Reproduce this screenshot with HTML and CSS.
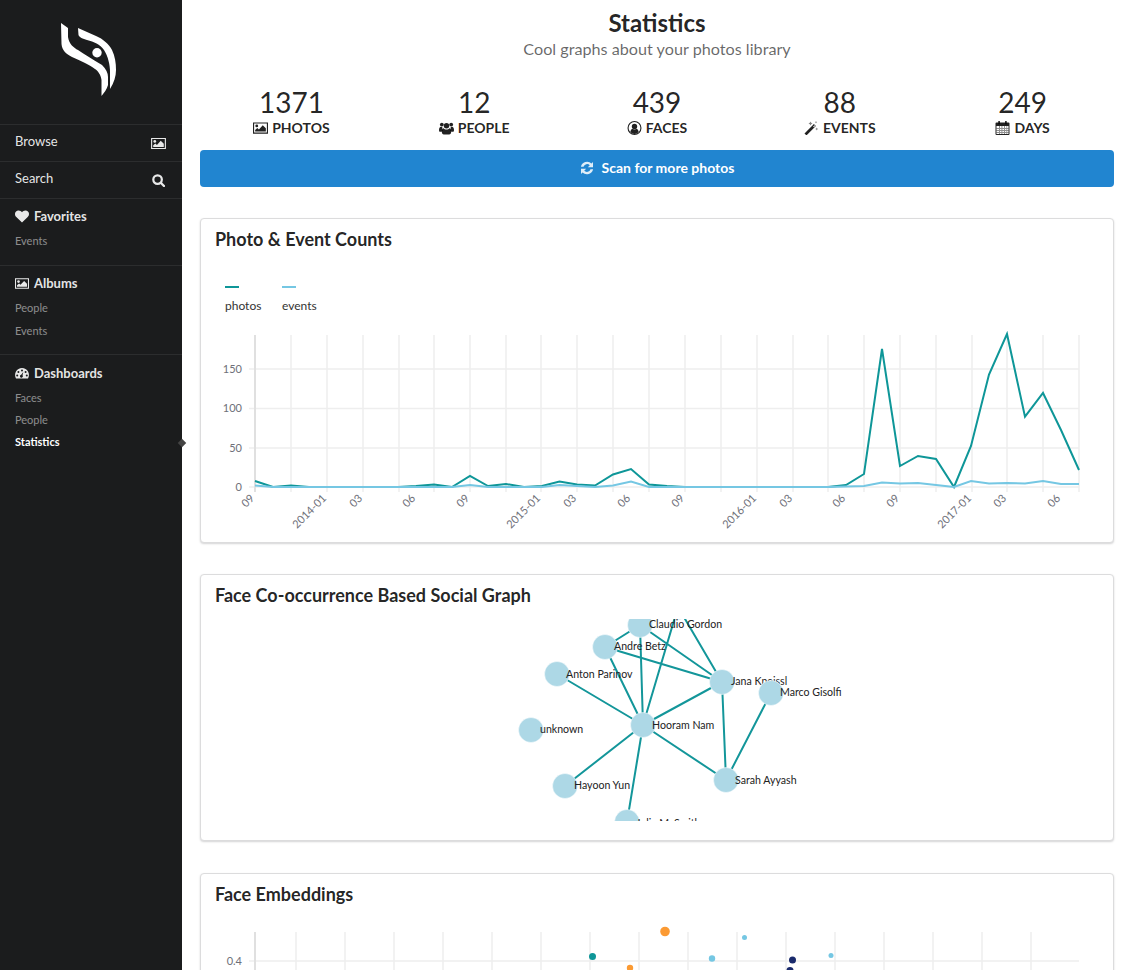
FILE: index.html
```html
<!DOCTYPE html>
<html lang="en">
<head>
    <meta charset="UTF-8">
    <meta name="viewport" content="width=device-width, initial-scale=1.0">
    <title>Statistics</title>
    <link rel="stylesheet" href="styles.css">
</head>
<body>

<svg class="icon-defs" width="0" height="0">
    <defs>
        <symbol id="i-image" viewBox="0 0 16 14">
            <path fill-rule="evenodd" d="M0 1h16v12H0zM1.200 2.200v9.600h13.600V2.200z"/>
            <circle cx="4" cy="4.800" r="1.500"/>
            <path d="M2.300 10.700V9l2.300-2 1.700 1.500L10.400 4l3.300 3.300v3.400z"/>
        </symbol>
        <symbol id="i-search" viewBox="0 0 14 14">
            <path fill-rule="evenodd" d="M6 .2a5.800 5.800 0 1 1 0 11.600A5.800 5.800 0 0 1 6 .2zm0 2.400a3.400 3.400 0 1 0 0 6.800 3.400 3.400 0 0 0 0-6.800z"/>
            <path d="M8.800 10.600l1.800-1.800 3.200 3.200a1.270 1.270 0 0 1-1.800 1.800z"/>
        </symbol>
        <symbol id="i-heart" viewBox="0 0 14 13">
            <path d="M7 12.600L1.300 7A3.700 3.700 0 0 1 0 4 3.500 3.500 0 0 1 3.700.4C5 .4 6.200 1.200 7 2.200 7.800 1.200 9 .4 10.300.4A3.500 3.500 0 0 1 14 4c0 1.200-.5 2.200-1.300 3z"/>
        </symbol>
        <symbol id="i-dash" viewBox="0 0 14 12">
            <path fill-rule="evenodd" d="M7 .5a7 7 0 0 1 6 10.500H1A7 7 0 0 1 7 .5zM7 2a1 1 0 1 0 0 2 1 1 0 0 0 0-2zM3.400 3.600a1 1 0 1 0 0 2 1 1 0 0 0 0-2zM10.600 3.600a1 1 0 1 0 0 2 1 1 0 0 0 0-2zM2.200 7a1 1 0 1 0 0 2 1 1 0 0 0 0-2zM11.800 7a1 1 0 1 0 0 2 1 1 0 0 0 0-2zM8.300 4.500L6.200 7.300a1.400 1.400 0 1 0 1.300.5z"/>
        </symbol>
        <symbol id="i-users" viewBox="0 0 16 14">
            <circle cx="8" cy="4.500" r="2.900"/>
            <circle cx="3" cy="3.300" r="2"/>
            <circle cx="13" cy="3.300" r="2"/>
            <path d="M0 9c0-2 .8-3.400 2.200-3.400.5 0 1 .2 1.400.5-.3 1-.1 2.300.6 3.200-.6.400-1.100 1-1.300 1.700H1C.3 11 0 10.200 0 9zM16 9c0-2-.8-3.400-2.200-3.400-.5 0-1 .2-1.400.5.300 1 .1 2.300-.6 3.200.6.400 1.100 1 1.300 1.700H15c.7 0 1-.8 1-2z"/>
            <path d="M4.800 7.200c.7.800 1.900 1.300 3.200 1.300s2.500-.5 3.200-1.300c1.300.2 1.800 1.800 1.800 3.800 0 1.700-.8 3-2.200 3H5.200C3.800 14 3 12.700 3 11c0-2 .5-3.600 1.800-3.800z"/>
        </symbol>
        <symbol id="i-face" viewBox="0 0 14 14">
            <path fill-rule="evenodd" d="M7 0a7 7 0 1 1 0 14A7 7 0 0 1 7 0zm0 1.100a5.900 5.900 0 1 0 0 11.800A5.900 5.900 0 0 0 7 1.100z"/>
            <circle cx="7" cy="5.500" r="2.700"/>
            <path d="M2.800 11c.3-1.800 1.200-3 2.300-3.200.5.400 1.200.7 1.900.7s1.400-.3 1.900-.7c1.100.2 2 1.400 2.300 3.200A5.900 5.900 0 0 1 7 12.900 5.900 5.900 0 0 1 2.800 11z"/>
        </symbol>
        <symbol id="i-magic" viewBox="0 0 14 14">
            <path d="M0 12.400L9.400 3l2 2L2 14.400z"/>
            <path d="M8.600 5.600l1.400-1.400 .7.700-1.400 1.400z" fill="#fff"/>
            <path d="M6 .5l.7 1.300L8 2.500l-1.300.7L6 4.500l-.7-1.300L4 2.500l1.300-.7zM12.200 6.500l.5 1 1 .5-1 .5-.5 1-.5-1-1-.5 1-.5zM11.500 0l.4.8.8.4-.8.4-.4.8-.4-.8-.8-.4.8-.4z" opacity=".55"/>
        </symbol>
        <symbol id="i-calendar" viewBox="0 0 14 14">
            <path fill-rule="evenodd" d="M1 1.500h12a1 1 0 0 1 1 1V13a1 1 0 0 1-1 1H1a1 1 0 0 1-1-1V2.500a1 1 0 0 1 1-1zM1 5v8h12V5z"/>
            <path d="M2.800 0h1.600v3.200H2.800zM9.600 0h1.600v3.200H9.600z"/>
            <path d="M3.500 5v8h.5V5zM6.200 5v8h.5V5zM8.900 5v8h.5V5zM11.200 5v8h.4V5zM1 7.100h12v.5H1zM1 9.300h12v.5H1zM1 11.300h12v.5H1z"/>
        </symbol>
        <symbol id="i-refresh" viewBox="0 0 14 14">
            <path d="M13 1v5.200H7.800l2-2A3.800 3.800 0 0 0 3.500 5.800H.9A6.400 6.400 0 0 1 11.500 2.500zM1 13V7.800h5.200l-2 2a3.800 3.800 0 0 0 6.300-1.600h2.600A6.400 6.400 0 0 1 2.500 11.500z"/>
        </symbol>
    </defs>
</svg>

<div class="layout">
    <aside class="sidebar">
        <div class="logo">
            <svg width="182" height="124" viewBox="0 0 182 124">
                <path class="logo-shape" d="M61 23 L68 28 L68 37 C69 44 74 48 78 50 C84 54 92 59 102 65 C106 69 108 73 108 77 L108 85 C107 89 104 93 101.500 96 L101.500 80 C101 75 98 71 95 69 C90 65 81 61 72 57 C66 54 62 50 61.500 44 Z"/>
                <path class="logo-shape" d="M78 28 C84 31 90 33 96 36 C103 39 109 44 112 50 C115 56 116 63 116 70 C116 76 114 83 110 89 L110 72 C110 65 108 56 104 50 C100 44 94 42 87 40 C83 39 79 37 78.500 35 Z"/>
                <circle class="logo-shape" cx="97" cy="52.700" r="4.700"/>
            </svg>
        </div>

        <a class="side-link">Browse <svg class="side-icon icon-browse"><use href="#i-image"/></svg></a>
        <a class="side-link">Search <svg class="side-icon icon-find"><use href="#i-search"/></svg></a>

        <div class="side-group group-fav">
            <div class="side-title"><svg class="title-icon"><use href="#i-heart"/></svg>Favorites</div>
            <a class="side-sub">Events</a>
        </div>
        <div class="side-group group-albums">
            <div class="side-title"><svg class="title-icon"><use href="#i-image"/></svg>Albums</div>
            <a class="side-sub">People</a>
            <a class="side-sub">Events</a>
        </div>
        <div class="side-group group-dash">
            <div class="side-title"><svg class="title-icon"><use href="#i-dash"/></svg>Dashboards</div>
            <a class="side-sub">Faces</a>
            <a class="side-sub">People</a>
            <a class="side-sub active">Statistics</a>
        </div>
        <span class="side-toggle"></span>
    </aside>

    <main class="content">
        <div class="page-head">
            <h1>Statistics</h1>
            <p>Cool graphs about your photos library</p>
        </div>

        <div class="stats">
            <div class="stat"><div class="stat-value">1371</div><div class="stat-label"><svg class="stat-icon"><use href="#i-image"/></svg>Photos</div></div>
            <div class="stat"><div class="stat-value">12</div><div class="stat-label"><svg class="stat-icon"><use href="#i-users"/></svg>People</div></div>
            <div class="stat"><div class="stat-value">439</div><div class="stat-label"><svg class="stat-icon"><use href="#i-face"/></svg>Faces</div></div>
            <div class="stat"><div class="stat-value">88</div><div class="stat-label"><svg class="stat-icon"><use href="#i-magic"/></svg>Events</div></div>
            <div class="stat"><div class="stat-value">249</div><div class="stat-label"><svg class="stat-icon"><use href="#i-calendar"/></svg>Days</div></div>
        </div>

        <button class="scan-button"><svg class="scan-icon"><use href="#i-refresh"/></svg>Scan for more photos</button>

        <section class="card card-counts">
            <h3>Photo &amp; Event Counts</h3>
            <svg class="plot" width="912" height="288" viewBox="201 253 912 288">
                <g class="legend">
                    <rect x="225" y="286" width="14" height="2" fill="#0e9698"/>
                    <rect x="282" y="286" width="14" height="2" fill="#75c7e3"/>
                    <text x="225" y="310">photos</text>
                    <text x="282" y="310">events</text>
                </g>
                <path class="grid" d="M291 335V492M327 335V492M363 335V492M399 335V492M434 335V492M470 335V492M506 335V492M541 335V492M577 335V492M613 335V492M649 335V492M685 335V492M721 335V492M757 335V492M793 335V492M828 335V492M864 335V492M900 335V492M936 335V492M972 335V492M1007 335V492M1043 335V492M1079 335V492"/>
                <path class="grid" d="M249 369H1079M249 408.500H1079M249 448H1079M249 487H1079"/>
                <path class="axis" d="M255 335V492"/>
                <g class="y-labels">
                    <text x="242" y="373">150</text>
                    <text x="242" y="412">100</text>
                    <text x="242" y="452">50</text>
                    <text x="242" y="491">0</text>
                </g>
                <g class="x-labels">
                    <text transform="translate(255 499) rotate(-45)">09</text>
                    <text transform="translate(327 499) rotate(-45)">2014-01</text>
                    <text transform="translate(363 499) rotate(-45)">03</text>
                    <text transform="translate(416 499) rotate(-45)">06</text>
                    <text transform="translate(470 499) rotate(-45)">09</text>
                    <text transform="translate(541 499) rotate(-45)">2015-01</text>
                    <text transform="translate(577 499) rotate(-45)">03</text>
                    <text transform="translate(631 499) rotate(-45)">06</text>
                    <text transform="translate(685 499) rotate(-45)">09</text>
                    <text transform="translate(757 499) rotate(-45)">2016-01</text>
                    <text transform="translate(793 499) rotate(-45)">03</text>
                    <text transform="translate(846 499) rotate(-45)">06</text>
                    <text transform="translate(900 499) rotate(-45)">09</text>
                    <text transform="translate(972 499) rotate(-45)">2017-01</text>
                    <text transform="translate(1007 499) rotate(-45)">03</text>
                    <text transform="translate(1061 499) rotate(-45)">06</text>
                </g>
                <polyline class="line-photos" points="255,481 273,487 291,485.500 309,487 327,487 345,487 363,487 380,487 398,487 416,486 434,484.500 452,487 470,476 488,486 506,484 524,487 542,486 559.500,481.500 577,484.500 595,485.500 613,474.500 631,469 649,484.500 667,486 685,487 810,487 828,487 846,485 864,474 882,349 900,466 918,456 936,459 954,487 971,446 989,374.500 1007,334 1025,416.700 1043,393 1061,430 1079,470"/>
                <polyline class="line-events" points="255,485.500 273,487 452,487 470,485 488,487 542,487 559.500,485 577,486 595,487 613,485.500 631,481.500 649,487 828,487 846,486.500 864,486 882,482.500 900,483.500 918,483 936,485 954,487 971,481 989,483.500 1007,483 1025,483.500 1043,481 1061,484 1079,484"/>
            </svg>
        </section>

        <section class="card card-graph">
            <h3>Face Co-occurrence Based Social Graph</h3>
            <svg class="graph" width="912" height="202" viewBox="201 619 912 202">
                <g class="edges">
                    <path d="M640 625L605 647M640 625L643 725M640 625L722 682M605 647L643 725M605 647L722 682M557 674L643 725M722 682L643 725M722 682L726 780M771 693L726 780M643 725L726 780M643 725L565 786M643 725L627 822M678 607L643 725M678 607L722 682"/>
                </g>
                <g class="nodes">
                    <circle cx="678" cy="607" r="12.500"/>
                    <circle cx="640" cy="625" r="12.500"/><text x="649" y="628">Claudio Gordon</text>
                    <circle cx="605" cy="647" r="12.500"/><text x="614" y="650">Andre Betz</text>
                    <circle cx="557" cy="674" r="12.500"/><text x="566" y="678">Anton Parinov</text>
                    <circle cx="531" cy="730" r="12.500"/><text x="540" y="733">unknown</text>
                    <circle cx="722" cy="682" r="12.500"/><text x="731" y="685">Jana Kneissl</text>
                    <circle cx="771" cy="693" r="12.500"/><text x="780" y="696">Marco Gisolfi</text>
                    <circle cx="643" cy="725" r="12.500"/><text x="652" y="729">Hooram Nam</text>
                    <circle cx="726" cy="780" r="12.500"/><text x="735" y="784">Sarah Ayyash</text>
                    <circle cx="565" cy="786" r="12.500"/><text x="574" y="789">Hayoon Yun</text>
                    <circle cx="627" cy="822" r="12.500"/><text x="636" y="827">Julia McSmith</text>
                </g>
            </svg>
        </section>

        <section class="card card-embed">
            <h3>Face Embeddings</h3>
            <svg class="plot" width="912" height="100" viewBox="201 908 912 100">
                <path class="grid" d="M296 932V980M345 932V980M394 932V980M443 932V980M492 932V980M541 932V980M590 932V980M639 932V980M688 932V980M737 932V980M786 932V980M835 932V980M884 932V980M933 932V980M982 932V980M1031 932V980"/>
                <path class="grid" d="M249 961H1079"/>
                <path class="axis" d="M255 932V980"/>
                <g class="y-labels"><text x="242" y="965">0.4</text></g>
                <circle cx="592.500" cy="956.500" r="3.500" fill="#0e9698"/>
                <circle cx="665" cy="931.500" r="4.800" fill="#fb9a33"/>
                <circle cx="630" cy="968" r="3.200" fill="#fb9a33"/>
                <circle cx="712" cy="958.500" r="3.200" fill="#75c7e3"/>
                <circle cx="744.500" cy="937.500" r="2.500" fill="#75c7e3"/>
                <circle cx="792.500" cy="960" r="3.500" fill="#1a2a6c"/>
                <circle cx="790" cy="970.500" r="3.500" fill="#1a2a6c"/>
                <circle cx="831" cy="955.500" r="2.500" fill="#75c7e3"/>
            </svg>
        </section>
    </main>
</div>

</body>
</html>
```

FILE: styles.css
```css
html, body {
    margin: 0;
    padding: 0;
    height: 100%;
    overflow: hidden;
}

body {
    font-family: Lato, 'Liberation Sans', sans-serif;
    font-size: 14px;
    line-height: 1.4285em;
    color: rgba(0, 0, 0, 0.87);
    background-color: #ffffff;
}

.icon-defs {
    position: absolute;
}

.layout {
    display: flex;
    height: 100%;
}

/* sidebar */
.sidebar {
    position: relative;
    flex: 0 0 182px;
    box-sizing: border-box;
    background-color: #1b1c1d;
    color: rgba(255, 255, 255, 0.9);
    font-size: 13px;
}

.logo {
    height: 124px;
}

.logo-shape {
    fill: #ffffff;
}

.side-link {
    display: flex;
    justify-content: space-between;
    align-items: center;
    box-sizing: border-box;
    height: 37px;
    padding: 0 16px 4px 15px;
    border-top: 1px solid rgba(255, 255, 255, 0.08);
}

.side-icon {
    margin-top: 4px;
    fill: rgba(255, 255, 255, 0.9);
}

.icon-browse {
    width: 15px;
    height: 13px;
}

.icon-find {
    width: 13px;
    height: 13px;
    margin-right: 1px;
}

.side-group {
    box-sizing: border-box;
    padding: 8px 15px 0;
    border-top: 1px solid rgba(255, 255, 255, 0.08);
}

.group-fav {
    height: 67px;
}

.group-albums {
    height: 89px;
}

.group-dash {
    padding-top: 9px;
}

.side-title {
    display: flex;
    align-items: center;
    height: 18px;
    margin-bottom: 6px;
    font-weight: 700;
}

.title-icon {
    width: 14px;
    height: 13px;
    margin-right: 5px;
    fill: rgba(255, 255, 255, 0.9);
}

.side-sub {
    display: block;
    height: 20px;
    margin-top: 3px;
    font-size: 11px;
    line-height: 20px;
    color: rgba(255, 255, 255, 0.5);
}

.group-dash .side-sub {
    margin-top: 2px;
}

.side-sub.active {
    font-weight: 700;
    color: #ffffff;
}

.side-toggle {
    position: absolute;
    left: 179px;
    top: 440px;
    width: 6px;
    height: 6px;
    background-color: #444444;
    transform: rotate(45deg);
}

/* main column */
.content {
    flex: 1;
    box-sizing: border-box;
    padding: 0 10px 0 18px;
    min-width: 0;
}

.page-head {
    text-align: center;
    padding-top: 8px;
}

.page-head h1 {
    margin: 0;
    font-size: 24px;
    line-height: 30px;
    font-weight: 700;
}

.page-head p {
    margin: 0;
    font-size: 16.2px;
    line-height: 22px;
    color: rgba(0, 0, 0, 0.6);
}

.stats {
    display: grid;
    grid-template-columns: repeat(5, 1fr);
    margin-top: 28px;
}

.stat {
    text-align: center;
}

.stat-value {
    font-size: 28px;
    line-height: 28px;
}

.stat-label {
    display: flex;
    justify-content: center;
    align-items: center;
    height: 24px;
    font-weight: 700;
    text-transform: uppercase;
}

.stat-icon {
    width: 15px;
    height: 14px;
    margin-right: 4px;
    fill: rgba(0, 0, 0, 0.87);
}

.scan-button {
    display: flex;
    justify-content: center;
    align-items: center;
    width: 100%;
    height: 37px;
    margin-top: 10px;
    padding: 0 0 2px;
    border: none;
    border-radius: 4px;
    background-color: #2185d0;
    color: #ffffff;
    font-family: inherit;
    font-size: 14px;
    font-weight: 700;
}

.scan-icon {
    width: 14px;
    height: 14px;
    margin-right: 8px;
    fill: rgba(255, 255, 255, 0.85);
}

/* cards */
.card {
    box-sizing: border-box;
    margin-top: 31px;
    border: 1px solid #dcdcdd;
    border-radius: 4px;
    box-shadow: 0 1px 2px 0 #d4d4d5;
    background-color: #ffffff;
}

.card h3 {
    margin: 0 0 3px;
    padding: 9px 14px 0;
    font-size: 18px;
    line-height: 22px;
    font-weight: 700;
}

.card-counts {
    height: 325px;
}

.card-graph {
    height: 267px;
}

.card-embed {
    height: 300px;
    margin-top: 32px;
}

.plot, .graph {
    display: block;
}

.graph {
    margin-top: 13px;
}

.plot text {
    font-size: 11px;
    fill: #6e7079;
}

.legend text {
    font-size: 12px;
    fill: #333333;
}

.grid {
    fill: none;
    stroke: #eeeeee;
    stroke-width: 1.5;
}

.axis {
    fill: none;
    stroke: #e0e0e0;
    stroke-width: 2;
}

.y-labels text {
    text-anchor: end;
}

.x-labels text {
    text-anchor: end;
}

.line-photos, .line-events {
    fill: none;
    stroke-width: 2;
}

.line-photos {
    stroke: #0e9698;
}

.line-events {
    stroke: #75c7e3;
}

.edges path {
    fill: none;
    stroke: #13969a;
    stroke-width: 2;
}

.nodes circle {
    fill: #add8e6;
    stroke: #ffffff;
    stroke-width: 0.5;
}

.nodes text {
    font-size: 10.6px;
    fill: #222222;
}
```
